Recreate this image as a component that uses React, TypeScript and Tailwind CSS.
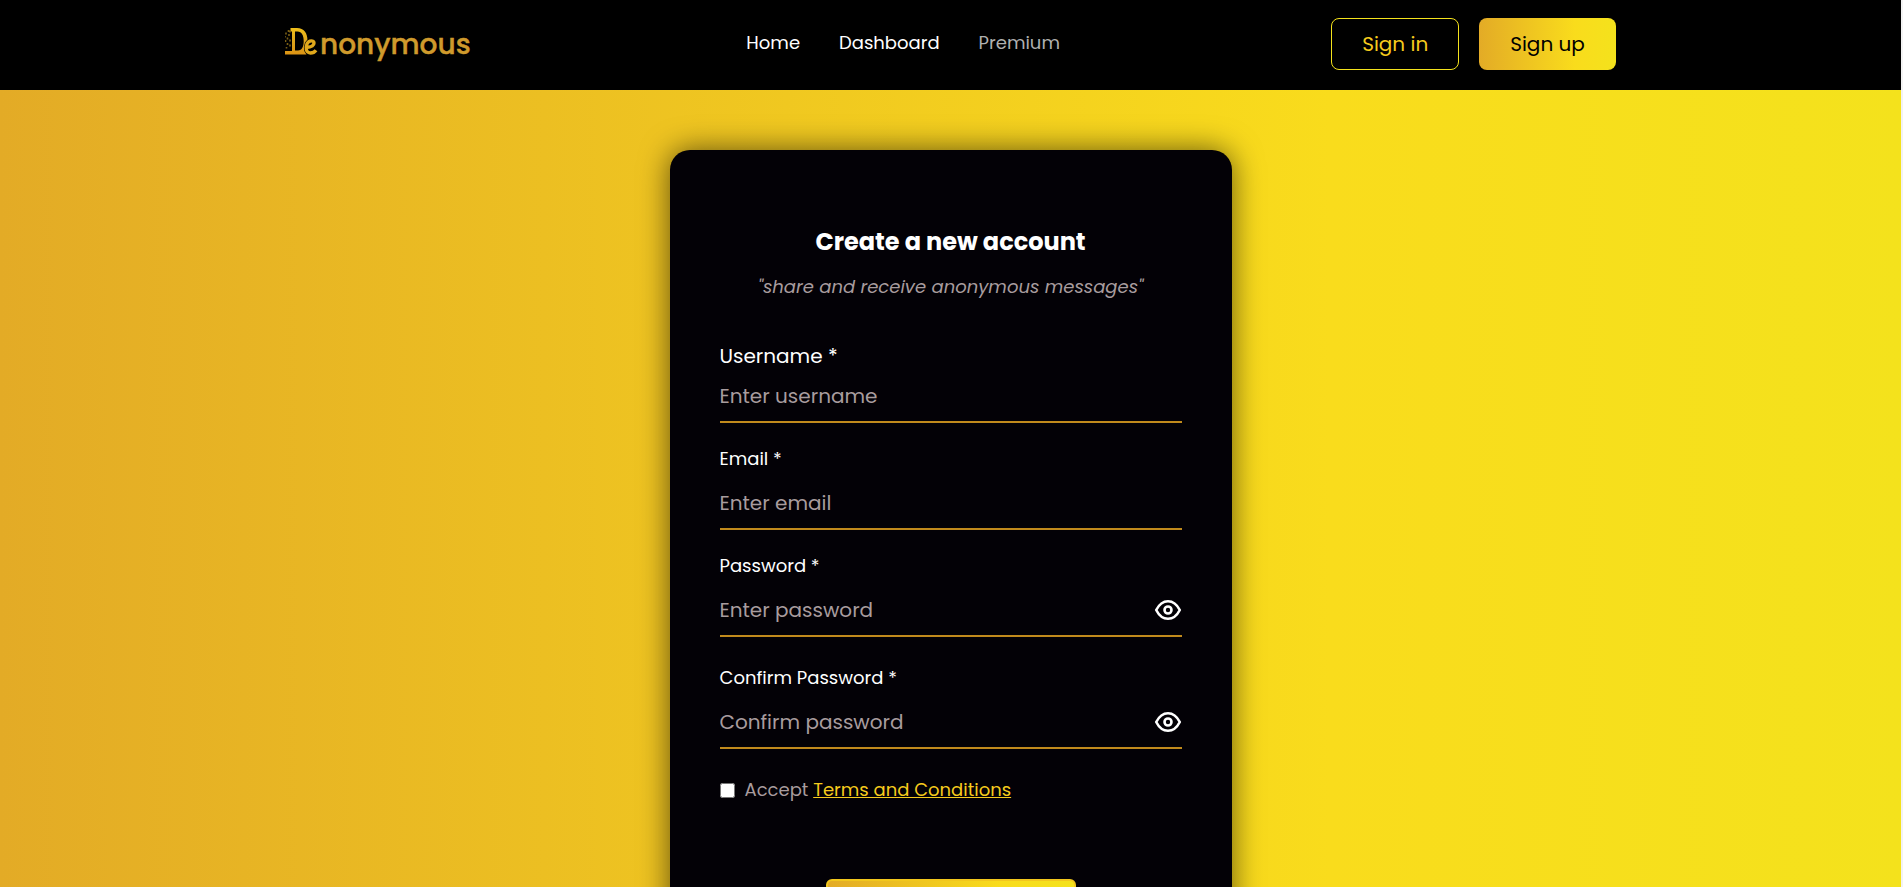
import { useState } from 'react';

const FONT = "font-['Poppins','Inter',sans-serif]";

function Logo() {
  return (
    <a href="#" aria-label="Denonymous" className="flex items-center">
      <svg width="190" height="44" viewBox="1 0 190 44" role="img" aria-label="Denonymous">
        <defs>
          <linearGradient id="gold" x1="0" y1="0" x2="0" y2="1">
            <stop offset="0" stopColor="#efbf1a" />
            <stop offset="0.5" stopColor="#dfa51c" />
            <stop offset="1" stopColor="#dc9414" />
          </linearGradient>
        </defs>
        <path
          fill="url(#gold)"
          fillRule="evenodd"
          d="M6.500 6H13c7 0 10.500 5 10.500 12.500 0 4-1 7.500-3 10l2 4H1v-3.500h7V9.500H6.500zM11 9.500V28.500h3c4 0 5.700-4 5.700-9.500s-2-9.500-6.200-9.500z"
        />
        <path
          d="M4.500 8v2M2 10.500v2M5 12v2M1 14v1.500M3.500 15.500v2M6 17.500v2M1.500 18v2M3.500 21v2M6 22.500v2M2.500 25v1.500M6 8.500v2"
          fill="none"
          stroke="#7a5f14"
          strokeWidth="1.600"
        />
        <path
          d="M22 25.500c5-.3 8-1.500 8-4.500s-5-3-7 .8c-2 5-.5 9.200 3.500 9.200 2.500 0 4.200-1 5.500-2.800"
          fill="none"
          stroke="#000"
          strokeWidth="4.600"
        />
        <path
          d="M22 25.500c5-.3 8-1.500 8-4.500s-5-3-7 .8c-2 5-.5 9.200 3.500 9.200 2.500 0 4.200-1 5.500-2.800"
          fill="none"
          stroke="#e0a81c"
          strokeWidth="3.400"
        />
        <text x="36" y="32" fontSize="28" fontWeight="500" fill="#cf9a2c" stroke="#cf9a2c" strokeWidth="0.400">nonymous</text>
      </svg>
    </a>
  );
}

function EyeIcon() {
  return (
    <svg width="28" height="28" viewBox="0 0 28 28" fill="none" stroke="currentColor" strokeWidth="2.600">
      <path d="M2.200 14C5 8.500 9 5.200 14 5.200s9 3.300 11.800 8.800c-2.800 5.500-6.800 8.800-11.800 8.800S5 19.500 2.200 14z" strokeLinejoin="round" />
      <circle cx="14" cy="14" r="3.500" />
    </svg>
  );
}

type FieldProps = {
  id: string;
  label: string;
  placeholder: string;
  type?: string;
  secret?: boolean;
  large?: boolean;
};

function Field({ id, label, placeholder, type = 'text', secret = false, large = false }: FieldProps) {
  const [shown, setShown] = useState(false);
  return (
    <div className="flex flex-col">
      <label htmlFor={id} className={large ? 'text-xl leading-[30px] text-white' : 'mb-1 text-lg leading-[30px] text-white'}>
        {label}
      </label>
      <div className="flex h-[52px] items-center border-b-2 border-[#c08a1c]">
        <input
          id={id}
          type={secret && !shown ? 'password' : type}
          placeholder={placeholder}
          className="min-w-0 flex-1 bg-transparent text-xl text-white outline-none placeholder:text-[#a89c9e]"
        />
        {secret && (
          <button
            type="button"
            aria-label={shown ? 'Hide password' : 'Show password'}
            onClick={() => setShown(!shown)}
            className="text-white"
          >
            <EyeIcon />
          </button>
        )}
      </div>
    </div>
  );
}

export default function App() {
  return (
    <div className={`${FONT} min-h-screen border-r-2 border-[#f3f3f3]`}>
      <header className="flex h-[90px] items-center justify-between bg-black px-[15%] pb-0.5">
        <Logo />
        <nav className="flex gap-[39px] pb-0.5 text-lg text-white">
          <a href="#">Home</a>
          <a href="#">Dashboard</a>
          <a href="#" className="text-[#b0b0b0]">Premium</a>
        </nav>
        <div className="flex gap-5 text-xl">
          <button type="button" className="h-[52px] rounded-lg border border-[#f4e21c] px-[30px] text-[#f6cb1d]">Sign in</button>
          <button type="button" className="h-[52px] rounded-lg bg-linear-to-r/srgb from-[#e3ab26] via-[#f9dc1c] via-70% to-[#f4e21c] px-[31px] text-black">Sign up</button>
        </div>
      </header>
      <main className="flex justify-center bg-linear-to-r/srgb from-[#e3ab26] via-[#f9dc1c] via-70% to-[#f4e21c] py-[60px]">
        <form className="flex w-full max-w-[562px] flex-col rounded-[20px] bg-[#030106] px-[50px] pt-[72px] pb-[60px] shadow-[0_0_30px_rgba(0,0,0,0.6)]">
          <h1 className="text-center text-2xl leading-10 font-bold text-white">Create a new account</h1>
          <p className="mt-[9px] text-center text-lg leading-8 text-[#a89c9e] italic">"share and receive anonymous messages"</p>
          <div className="mt-[38px] flex flex-col gap-[21px]">
            <Field id="username" label="Username *" placeholder="Enter username" large />
            <Field id="email" label="Email *" placeholder="Enter email" type="email" />
            <Field id="password" label="Password *" placeholder="Enter password" secret />
          </div>
          <div className="mt-[26px]">
            <Field id="confirm" label="Confirm Password *" placeholder="Confirm password" secret />
          </div>
          <div className="mt-[27px] flex items-center gap-2.5 text-lg">
            <input id="terms" type="checkbox" className="size-[15px]" />
            <label htmlFor="terms" className="text-[#a89c9e]">
              Accept <a href="#" className="text-[#f6cb1d] underline">Terms and Conditions</a>
            </label>
          </div>
          <button
            type="submit"
            className="mt-[75px] h-[60px] w-[250px] self-center rounded-md border-2 border-[#f2c71d] bg-linear-to-r/srgb from-[#e3ab26] via-[#f9dc1c] via-70% to-[#f4e21c] text-xl text-black"
          >
            Sign up
          </button>
        </form>
      </main>
    </div>
  );
}
